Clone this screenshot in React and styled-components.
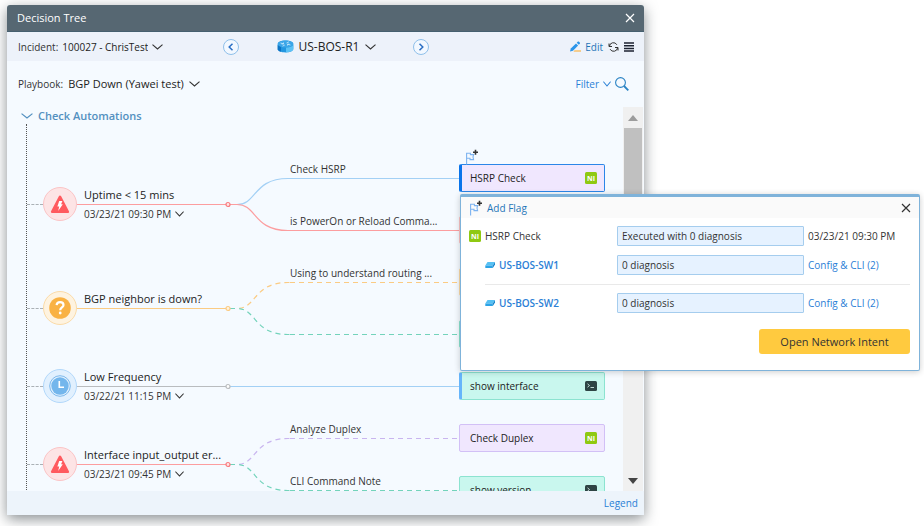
import React from 'react';
import styled, { createGlobalStyle, css } from 'styled-components';

const GlobalStyle = createGlobalStyle`
    *, *::before, *::after {
        box-sizing: border-box;
    }

    body {
        margin: 0;
        background: #fff;
        color: #333;
        font: 10px/18px 'Open Sans', 'Noto Sans', sans-serif;
    }

    button, input, select {
        font: inherit;
        color: inherit;
    }

    svg {
        display: block;
        flex: none;
    }
`;

const palette = {
    red: { line: '#fc9d9f', fill: '#fde4e5', border: '#fbc4c6' },
    orange: { line: '#fbcb83', fill: '#fef3e0', border: '#fbdba8' },
    blue: { line: '#a3d0f5', fill: '#e1f0fe', border: '#b2d8fb' },
    gray: { line: '#b9bcbf', fill: '#fff', border: '#a9a9a9' },
    purple: { line: '#c9b5ef', fill: '#f0e7fe', border: '#d2c0f6' },
    teal: { line: '#73d3bb', fill: '#c9f7ee', border: '#8ce3d0' },
};

const Page = styled.main`
    position: relative;
    display: flex;
    height: 100vh;
    padding: 5px 280px 11px 7px;
    overflow: hidden;
`;

const Window = styled.section`
    flex: 1;
    min-width: 0;
    display: flex;
    flex-direction: column;
    border-radius: 3px 3px 0 0;
    background: #f5faff;
    box-shadow: 0 4px 14px rgba(40, 50, 55, 0.55);
`;

const TitleBar = styled.header`
    display: flex;
    align-items: center;
    justify-content: space-between;
    height: 27px;
    padding: 0 9px 0 10px;
    border-bottom: 1px solid #46606f;
    border-radius: 3px 3px 0 0;
    background: #566772;
    color: #fff;
`;

const Title = styled.h1`
    margin: 0;
    font-size: 11px;
    font-weight: 400;
`;

const PlainButton = styled.button`
    display: inline-flex;
    align-items: center;
    gap: 4px;
    padding: 0;
    border: 0;
    background: none;
    color: ${(props) => props.$color || 'inherit'};
    cursor: pointer;
`;

const Toolbar = styled.div`
    display: flex;
    align-items: center;
    height: 29px;
    padding: 0 10px 0 11px;
    background: #edf2fa;
`;

const ToolbarSide = styled.div`
    flex: 1;
    display: flex;
    align-items: center;
    justify-content: ${(props) => (props.$end ? 'flex-end' : 'flex-start')};
    gap: 5px;
`;

const DeviceNav = styled.nav`
    display: flex;
    align-items: center;
    justify-content: space-between;
    width: 206px;
`;

const RoundButton = styled.button`
    display: flex;
    align-items: center;
    justify-content: center;
    width: 16px;
    height: 16px;
    padding: 0;
    border: 1px solid #8fc0ea;
    border-radius: 50%;
    background: #f2f8ff;
    color: #2a6fc4;
    cursor: pointer;
`;

const Field = styled.div`
    display: flex;
    align-items: center;
    gap: ${(props) => (props.$wide ? '5px' : '4px')};
`;

const Select = styled.select`
    appearance: none;
    padding: 0;
    border: 0;
    background: none;
    color: #222;
    font-size: ${(props) => props.$size || 10}px;
    font-weight: ${(props) => (props.$strong ? 500 : 400)};
    cursor: pointer;
`;

const PlaybookRow = styled.div`
    display: flex;
    align-items: center;
    justify-content: space-between;
    height: 46px;
    padding: 0 15px 0 11px;
`;

const Viewport = styled.div`
    flex: 1;
    min-height: 0;
    display: flex;
    overflow: hidden;
`;

const Tree = styled.div`
    flex: 1;
    min-width: 0;
    padding-right: 18px;
`;

const TreeHead = styled.button`
    display: flex;
    align-items: center;
    gap: 5px;
    height: 17px;
    padding: 0 0 0 14px;
    border: 0;
    background: none;
    color: #5390c0;
    font-size: 11px;
    font-weight: 600;
    cursor: pointer;
`;

const Rail = styled.ul`
    margin: 0 0 0 19px;
    padding: 28px 0 0;
    border-left: 1px dotted #555;
    list-style: none;
`;

const Check = styled.li`
    display: flex;
    align-items: center;
`;

const Connector = styled.span`
    width: 16px;
    border-top: 1px dashed #aab0b5;
`;

const Badge = styled.span`
    display: flex;
    align-items: center;
    justify-content: center;
    width: 34px;
    height: 34px;
    border: 1px solid ${(props) => palette[props.$tone].border};
    border-radius: 50%;
    background: ${(props) => palette[props.$tone].fill};
`;

const Line = styled.span`
    height: 1px;
    background: ${(props) => palette[props.$tone].line};
    ${(props) =>
        props.$dashed &&
        css`
            background: repeating-linear-gradient(
                to right,
                ${palette[props.$tone].line} 0 5px,
                transparent 5px 9px
            );
        `}
`;

const Trunk = styled.div`
    width: 150px;
    display: grid;
    grid-template-rows: 18px 1px 18px;
`;

const TrunkTitle = styled.h2`
    margin: 0;
    padding-left: 7px;
    color: #222;
    font-size: 11px;
    font-weight: 500;
    white-space: nowrap;
`;

const TrunkTime = styled(PlainButton)`
    padding-left: 7px;
`;

const Leaves = styled.ul`
    flex: 1;
    min-width: 0;
    margin: 0;
    padding: 0;
    list-style: none;
`;

const Leaf = styled.li`
    display: flex;
    align-items: center;
    height: 52px;
`;

const LeafPath = styled.div`
    flex: 1;
    min-width: 0;
    display: grid;
    grid-template-rows: 18px 1px 18px;
`;

const LeafLabel = styled.span`
    grid-row: 1;
    white-space: nowrap;
`;

const LeafLine = styled(Line)`
    grid-row: 2;
`;

const Card = styled.button`
    position: relative;
    display: flex;
    align-items: center;
    justify-content: space-between;
    width: 146px;
    height: 28px;
    padding: 0 7px 0 10px;
    border: 1px solid ${(props) => palette[props.$tone].border};
    border-radius: 2px;
    background: ${(props) => palette[props.$tone].fill};
    color: #222;
    font-weight: 500;
    cursor: pointer;
    ${(props) =>
        props.$done &&
        css`
            padding-left: 8px;
            border-left: 3px solid #66b5fb;
        `}
    ${(props) =>
        props.$selected &&
        css`
            padding-left: 8px;
            border-color: #2b86e8;
            border-left: 3px solid #0a74ea;
        `}
`;

const CardFlag = styled.span`
    position: absolute;
    bottom: 26px;
    left: 3px;
`;

const Scrollbar = styled.div`
    display: flex;
    flex-direction: column;
    align-items: center;
    width: 20px;
    margin-right: 1px;
    background: #f0f0f0;
`;

const ScrollArrow = styled.button`
    display: flex;
    align-items: center;
    justify-content: center;
    width: 20px;
    height: 21px;
    padding: 0;
    border: 0;
    background: none;
    color: ${(props) => (props.$muted ? '#9c9c9c' : '#444')};
`;

const ScrollTrack = styled.div`
    flex: 1;
    width: 18px;
`;

const ScrollThumb = styled.div`
    height: 62%;
    background: #c0c0c0;
`;

const Footer = styled.footer`
    display: flex;
    align-items: center;
    justify-content: flex-end;
    height: 24px;
    padding-right: 6px;
    background: #edf4fb;
`;

const Link = styled.a`
    color: #2b80d6;
    font-weight: ${(props) => props.$weight || 400};
    text-decoration: none;
`;

const Popup = styled.section`
    position: absolute;
    top: 194px;
    right: 4px;
    width: 460px;
    border: 1px solid #7fb3da;
    border-top-width: 3px;
    border-radius: 2px;
    background: #fff;
    box-shadow: 0 1px 6px rgba(0, 0, 0, 0.2);
`;

const PopupHead = styled.header`
    display: flex;
    align-items: center;
    justify-content: space-between;
    height: 21px;
    padding: 0 8px;
    background: #fafafa;
`;

const PopupBody = styled.div`
    padding: 8px 9px 16px 8px;
`;

const Result = styled.div`
    display: grid;
    grid-template-columns: minmax(0, 1fr) 187px 102px;
    align-items: center;
    column-gap: 4px;
    margin-left: ${(props) => (props.$nested ? '16px' : 0)};
    padding-bottom: 9px;

    & + & + & {
        padding-top: 8px;
        border-top: 1px solid #e9e9e9;
    }
`;

const ResultName = styled.label`
    display: flex;
    align-items: center;
    gap: 4px;
`;

const ResultBox = styled.input`
    width: 100%;
    height: 20px;
    padding: 0 4px;
    border: 1px solid #a5cdee;
    border-radius: 1px;
    background: #e6f2ff;
`;

const PopupActions = styled.div`
    display: flex;
    justify-content: flex-end;
    padding-top: 7px;
`;

const PrimaryButton = styled.button`
    width: 151px;
    height: 25px;
    padding: 0;
    border: 0;
    border-radius: 3px;
    background: #ffca3f;
    font-size: 11px;
    cursor: pointer;
`;

const Chevron = ({ width = 11 }) => (
    <svg
        width={width}
        height="6"
        viewBox="0 0 11 6"
        fill="none"
        stroke="currentColor"
        strokeWidth="1.1"
        preserveAspectRatio="none"
    >
        <path d="M.5.6 5.5 5 10.5.6" />
    </svg>
);

const CloseIcon = () => (
    <svg width="10" height="10" stroke="currentColor" strokeWidth="1.2">
        <path d="M1 1l8 8M9 1L1 9" />
    </svg>
);

const ArrowIcon = ({ right }) => (
    <svg width="8" height="8" fill="none" stroke="currentColor" strokeWidth="1.5">
        <path d={right ? 'M2.5.8 5.8 4 2.5 7.2' : 'M5.5.8 2.2 4 5.5 7.2'} />
    </svg>
);

const RouterIcon = () => (
    <svg width="17" height="13" viewBox="0 0 17 13">
        <path
            d="M.7 4C.7 2 4 .6 8.5.6S16.3 2 16.3 4v5c0 2-3.3 3.4-7.8 3.4S.7 11 .7 9z"
            fill="#2397e0"
        />
        <path d="M4 6.8v5L1.8 11 .7 9.5V5z" fill="#0d74c4" />
        <path d="M9 7.5c3 0 6-.8 7.3-2.5v4c0 2-3.3 3.2-7.3 3.4z" fill="#5cc2f5" />
        <ellipse cx="8.5" cy="4" rx="7.8" ry="3.4" fill="#3ba6e8" />
        <path
            d="M3.5 3l3 .8M6.5 2.5V4h-2M13.5 5l-3-.8M10.5 5.6V4.2h2M9.5 3 12 1.8M7.8 5 5.5 6.2"
            stroke="#d8f1ff"
            strokeWidth=".7"
            fill="none"
        />
    </svg>
);

const PencilIcon = () => (
    <svg width="11" height="11" viewBox="0 0 11 11">
        <path d="M4.5 9.2H11v1.5H3.5z" fill="#f7c06a" />
        <path d="M0 10.6l.8-3.2L6 2.4l2.1 2.1L3 9.8z" fill="#2b95ea" />
        <path d="M6.700 1.700l1-1c.4-.4.9-.4 1.300 0l.8.8c.4.4.4.900 0 1.300l-1 1z" fill="#2b95ea" />
    </svg>
);

const RefreshIcon = () => (
    <svg width="11" height="10" viewBox="0 0 11 10" fill="none" stroke="#333" strokeWidth="1">
        <path d="M1.400 4.300A4 4 0 0 1 8.900 2.800M9.600 5.700A4 4 0 0 1 2.100 7.200" />
        <path d="M1 1.500v3h3M10 8.500v-3H7" />
    </svg>
);

const MenuIcon = () => (
    <svg width="10" height="10" stroke="#1c2230" strokeWidth="1.500">
        <path d="M0 1h10M0 3.700h10M0 6.400h10M0 9.100h10" />
    </svg>
);

const SearchIcon = () => (
    <svg width="14" height="14" viewBox="0 0 14 14" fill="none" stroke="#2a83c4">
        <circle cx="5.5" cy="5.5" r="4.9" strokeWidth="1.1" />
        <path d="M9 9l4.300 4.300" strokeWidth="1.800" />
    </svg>
);

const FlagIcon = () => (
    <svg width="14" height="16" viewBox="0 0 14 16" fill="none">
        <path
            d="M1.600 15.500V4.300h3.800v1.300h3.200L8 8l.6 2.600H5V9.300H1.600"
            stroke="#7db3f0"
            strokeWidth="1.100"
        />
        <path d="M10.500.8v5M8 3.300h5" stroke="#333" strokeWidth="1.600" />
    </svg>
);

const NiIcon = () => (
    <svg width="12" height="12" viewBox="0 0 12 12">
        <rect width="12" height="12" rx="1.500" fill="#8fc912" />
        <text
            x="6"
            y="8.500"
            fill="#fff"
            fontSize="7"
            fontWeight="700"
            fontFamily="Open Sans, sans-serif"
            textAnchor="middle"
        >
            NI
        </text>
    </svg>
);

const TerminalIcon = () => (
    <svg width="12" height="10" viewBox="0 0 12 10">
        <rect width="12" height="10" rx="1.500" fill="#2e4444" />
        <path
            d="M2.500 2.800l2 1.700-2 1.700M5.500 6.500H9"
            stroke="#cfe6e2"
            strokeWidth=".9"
            fill="none"
        />
    </svg>
);

const SwitchIcon = () => (
    <svg width="10" height="8" viewBox="0 0 10 8">
        <path d="M2.500 1H10L7.800 4.500H.3z" fill="#56c0f3" />
        <path d="M.3 4.500h7.500V7H.3z" fill="#2ba3e6" />
        <path d="M7.800 4.500 10 1v2.500L7.800 7z" fill="#1583cb" />
    </svg>
);

const AlertIcon = () => (
    <svg width="20" height="19" viewBox="0 0 20 19">
        <path
            d="M10 1.800 17.800 16.800H2.200z"
            fill="#ff5a5f"
            stroke="#ff5a5f"
            strokeWidth="2.600"
            strokeLinejoin="round"
        />
        <path d="M9.200 6h3.200l-1.300 3.200h1.700L8.200 16l1-4.500H7.400z" fill="#fff" />
    </svg>
);

const QuestionIcon = () => (
    <svg width="22" height="22" viewBox="0 0 22 22">
        <circle cx="11" cy="11" r="10.800" fill="#f9b244" />
        <path
            d="M7.600 8.200c.2-2 1.600-3 3.500-3s3.400 1.100 3.400 2.800c0 2.400-3.300 2.500-3.300 5.200"
            stroke="#fff"
            strokeWidth="2.200"
            fill="none"
        />
        <circle cx="11.200" cy="16" r="1.400" fill="#fff" />
    </svg>
);

const ClockIcon = () => (
    <svg width="22" height="22" viewBox="0 0 22 22" fill="none">
        <circle cx="11" cy="11" r="10.300" stroke="#7db9ec" />
        <circle cx="11" cy="11" r="8.700" fill="#73b6ec" />
        <path d="M10.300 6v6.200H15" stroke="#fff" strokeWidth="1.600" />
    </svg>
);

const Triangle = ({ down }) => (
    <svg width="10" height="6" fill="currentColor">
        <path d={down ? 'M0 0h10L5 6z' : 'M0 6h10L5 0z'} />
    </svg>
);

const icons = { alert: AlertIcon, question: QuestionIcon, clock: ClockIcon };

// Joins the end of a trunk to the middle of each 52px leaf row.
const Branches = ({ tone, leaves }) => {
    const height = leaves.length * 52;
    const middle = height / 2 + 0.5;

    return (
        <svg width="63" height={height} fill="none" overflow="visible">
            {leaves.map((leaf, index) => {
                const y = index * 52 + 26.5;

                return (
                    <path
                        key={leaf.tone + index}
                        d={`M3 ${middle}H10C30 ${middle} 26 ${y} 61 ${y}H63`}
                        stroke={palette[leaf.tone].line}
                        strokeWidth="1.200"
                        strokeDasharray={leaf.dashed ? '5 4' : undefined}
                    />
                );
            })}
            <circle
                cx="1"
                cy={middle}
                r="2"
                fill={palette[tone].fill}
                stroke={tone === 'red' ? '#f87a7e' : palette[tone].line}
                strokeWidth="1.200"
            />
        </svg>
    );
};

const checks = [
    {
        title: 'Uptime < 15 mins',
        time: '03/23/21 09:30 PM',
        tone: 'red',
        icon: 'alert',
        leaves: [
            { label: 'Check HSRP', tone: 'blue', card: 'HSRP Check', cardTone: 'purple', selected: true },
            { label: 'is PowerOn or Reload Comma...', tone: 'red', cardTone: 'red' },
        ],
    },
    {
        title: 'BGP neighbor is down?',
        tone: 'orange',
        icon: 'question',
        leaves: [
            { label: 'Using to understand routing ...', tone: 'orange', dashed: true, cardTone: 'orange' },
            { tone: 'teal', dashed: true, cardTone: 'teal' },
        ],
    },
    {
        title: 'Low Frequency',
        time: '03/22/21 11:15 PM',
        tone: 'gray',
        badge: 'blue',
        icon: 'clock',
        leaves: [{ tone: 'blue', card: 'show interface', cardTone: 'teal', done: true }],
    },
    {
        title: 'Interface input_output er...',
        time: '03/23/21 09:45 PM',
        tone: 'red',
        icon: 'alert',
        leaves: [
            { label: 'Analyze Duplex', tone: 'purple', dashed: true, card: 'Check Duplex', cardTone: 'purple' },
            { label: 'CLI Command Note', tone: 'teal', dashed: true, card: 'show version', cardTone: 'teal' },
        ],
    },
];

const CheckRow = ({ check }) => {
    const Icon = icons[check.icon];

    return (
        <Check>
            <Connector />
            <Badge $tone={check.badge || check.tone}>
                <Icon />
            </Badge>
            <Trunk>
                <TrunkTitle>{check.title}</TrunkTitle>
                <Line $tone={check.tone} />
                {check.time && (
                    <TrunkTime>
                        {check.time}
                        <Chevron width={9} />
                    </TrunkTime>
                )}
            </Trunk>
            <Branches tone={check.tone} leaves={check.leaves} />
            <Leaves>
                {check.leaves.map((leaf, index) => (
                    <Leaf key={index}>
                        <LeafPath>
                            {leaf.label && <LeafLabel>{leaf.label}</LeafLabel>}
                            <LeafLine $tone={leaf.tone} $dashed={leaf.dashed} />
                        </LeafPath>
                        <Card $tone={leaf.cardTone} $selected={leaf.selected} $done={leaf.done}>
                            {leaf.selected && (
                                <CardFlag>
                                    <FlagIcon />
                                </CardFlag>
                            )}
                            {leaf.card}
                            {leaf.card &&
                                (leaf.cardTone === 'purple' ? <NiIcon /> : <TerminalIcon />)}
                        </Card>
                    </Leaf>
                ))}
            </Leaves>
        </Check>
    );
};

const DeviceResult = ({ id, name }) => (
    <Result $nested>
        <ResultName htmlFor={id}>
            <SwitchIcon />
            <Link href="#device" $weight={600}>
                {name}
            </Link>
        </ResultName>
        <ResultBox id={id} readOnly value="0 diagnosis" />
        <Link href="#config">Config &amp; CLI (2)</Link>
    </Result>
);

const App = () => (
    <Page>
        <GlobalStyle />
        <Window>
            <TitleBar>
                <Title>Decision Tree</Title>
                <PlainButton aria-label="Close">
                    <CloseIcon />
                </PlainButton>
            </TitleBar>
            <Toolbar>
                <ToolbarSide>
                    <Field>
                        <label htmlFor="incident">Incident:</label>
                        <Select id="incident">
                            <option>100027 - ChrisTest</option>
                        </Select>
                        <Chevron />
                    </Field>
                </ToolbarSide>
                <DeviceNav>
                    <RoundButton aria-label="Previous device">
                        <ArrowIcon />
                    </RoundButton>
                    <Field $wide>
                        <RouterIcon />
                        <Select aria-label="Device" $size={12} $strong>
                            <option>US-BOS-R1</option>
                        </Select>
                        <Chevron />
                    </Field>
                    <RoundButton aria-label="Next device">
                        <ArrowIcon right />
                    </RoundButton>
                </DeviceNav>
                <ToolbarSide $end>
                    <PlainButton $color="#1f76b8">
                        <PencilIcon />
                        Edit
                    </PlainButton>
                    <PlainButton aria-label="Refresh">
                        <RefreshIcon />
                    </PlainButton>
                    <PlainButton aria-label="Menu">
                        <MenuIcon />
                    </PlainButton>
                </ToolbarSide>
            </Toolbar>
            <PlaybookRow>
                <Field $wide>
                    <label htmlFor="playbook">Playbook:</label>
                    <Select id="playbook" $size={11} $strong>
                        <option>BGP Down (Yawei test)</option>
                    </Select>
                    <Chevron />
                </Field>
                <Field>
                    <PlainButton $color="#2b80d6">
                        Filter
                        <Chevron width={8} />
                    </PlainButton>
                    <PlainButton aria-label="Search">
                        <SearchIcon />
                    </PlainButton>
                </Field>
            </PlaybookRow>
            <Viewport>
                <Tree>
                    <TreeHead>
                        <Chevron width={12} />
                        Check Automations
                    </TreeHead>
                    <Rail>
                        {checks.map((check) => (
                            <CheckRow key={check.title} check={check} />
                        ))}
                    </Rail>
                </Tree>
                <Scrollbar>
                    <ScrollArrow aria-label="Scroll up" $muted>
                        <Triangle />
                    </ScrollArrow>
                    <ScrollTrack>
                        <ScrollThumb />
                    </ScrollTrack>
                    <ScrollArrow aria-label="Scroll down">
                        <Triangle down />
                    </ScrollArrow>
                </Scrollbar>
            </Viewport>
            <Footer>
                <Link href="#legend" $weight={500}>
                    Legend
                </Link>
            </Footer>
        </Window>
        <Popup>
            <PopupHead>
                <PlainButton $color="#1f76b8">
                    <FlagIcon />
                    Add Flag
                </PlainButton>
                <PlainButton aria-label="Close result">
                    <CloseIcon />
                </PlainButton>
            </PopupHead>
            <PopupBody>
                <Result>
                    <ResultName htmlFor="summary">
                        <NiIcon />
                        HSRP Check
                    </ResultName>
                    <ResultBox id="summary" readOnly value="Executed with 0 diagnosis" />
                    <time>03/23/21 09:30 PM</time>
                </Result>
                <DeviceResult id="sw1" name="US-BOS-SW1" />
                <DeviceResult id="sw2" name="US-BOS-SW2" />
                <PopupActions>
                    <PrimaryButton>Open Network Intent</PrimaryButton>
                </PopupActions>
            </PopupBody>
        </Popup>
    </Page>
);

export default App;
